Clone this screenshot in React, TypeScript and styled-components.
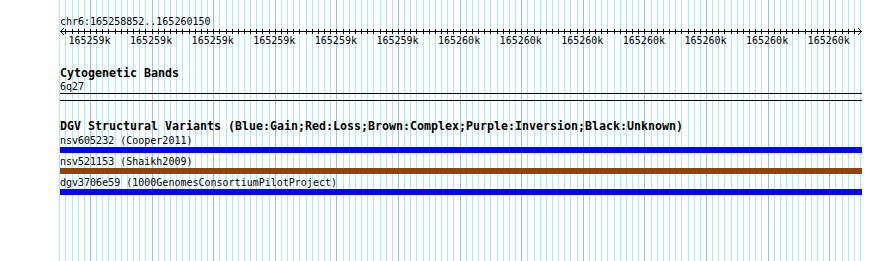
import styled, { createGlobalStyle } from "styled-components";

const GlobalStyle = createGlobalStyle`
  html, body {
    margin: 0;
    padding: 0;
    background: #fff;
  }
`;

// bp scale read off the picture: one minor grid line every 10 bp
const GRID_START = 59.2;
const GRID_STEP = 6.16;
const GRID_COUNT = 131;
const AXIS_LEFT = 60;
const AXIS_RIGHT = 862;

const gridX = (n: number) => Math.round(GRID_START + GRID_STEP * n) + 0.5;

const tickLabels = [
  "165259k", "165259k", "165259k", "165259k", "165259k", "165259k",
  "165260k", "165260k", "165260k", "165260k", "165260k", "165260k", "165260k",
];

const variants = [
  { name: "nsv605232", study: "Cooper2011", color: "#0000ff" },
  { name: "nsv521153", study: "Shaikh2009", color: "#8b4513" },
  { name: "dgv3706e59", study: "1000GenomesConsortiumPilotProject", color: "#0000ff" },
];

const Page = styled.main`
  position: relative;
  width: 890px;
  height: 261px;
  overflow: hidden;
  background: #fff;
  color: #000;
`;

const GridLayer = styled.svg`
  position: absolute;
  inset: 0;
  pointer-events: none;
`;

const Tracks = styled.div`
  position: relative;
  width: 802px;
  padding-left: 60px;
  display: flex;
  flex-direction: column;
`;

const Track = styled.section<{ $gap: number }>`
  display: flex;
  flex-direction: column;
  margin-top: ${(p) => p.$gap}px;
`;

const TrackTitle = styled.h2`
  margin: 0;
  font-family: "DejaVu Sans Mono", monospace;
  font-weight: bold;
  font-size: 11.63px;
  line-height: 11px;
  white-space: nowrap;
`;

const SmallLabel = styled.div<{ $top?: number }>`
  font-family: "DejaVu Sans Mono", monospace;
  font-size: 10px;
  line-height: 12px;
  margin-top: ${(p) => p.$top ?? 0}px;
  white-space: nowrap;
`;

const Ruler = styled.svg`
  display: block;
  width: 802px;
  height: 20px;
  margin-left: -60px;
  padding-left: 0;
  overflow: visible;
`;

const BandBox = styled.div`
  height: 6px;
  border-top: 1px solid #000;
  border-bottom: 1px solid #000;
`;

const Bar = styled.div<{ $color: string }>`
  height: 6px;
  background: ${(p) => p.$color};
`;

function Grid() {
  return (
    <GridLayer width={890} height={261} shapeRendering="crispEdges">
      {Array.from({ length: GRID_COUNT }, (_, n) => (
        <line
          key={n}
          x1={gridX(n)}
          x2={gridX(n)}
          y1={0}
          y2={261}
          stroke={n % 10 === 5 ? "#8cc6ea" : "#a6ecf0"}
          strokeWidth={1}
        />
      ))}
    </GridLayer>
  );
}

function Axis() {
  const y = 3.5;
  return (
    <Ruler viewBox="0 0 862 20" width={862} height={20} style={{ width: 862 }}>
      <g stroke="#000" strokeWidth={1} shapeRendering="crispEdges">
        <line x1={AXIS_LEFT} x2={AXIS_RIGHT} y1={y} y2={y} />
        {Array.from({ length: GRID_COUNT }, (_, n) => {
          const x = gridX(n);
          if (x < AXIS_LEFT + 3 || x > AXIS_RIGHT - 3) return null;
          return <line key={n} x1={x} x2={x} y1={1} y2={6} />;
        })}
      </g>
      <g stroke="#000" strokeWidth={1} fill="none">
        <polyline points={`${AXIS_LEFT + 4},0 ${AXIS_LEFT + 0.5},${y} ${AXIS_LEFT + 4},7`} />
        <polyline points={`${AXIS_RIGHT - 4},0 ${AXIS_RIGHT - 0.5},${y} ${AXIS_RIGHT - 4},7`} />
      </g>
      {tickLabels.map((label, i) => (
        <text
          key={i}
          x={89.5 + 61.6 * i}
          y={16}
          textAnchor="middle"
          fontFamily="DejaVu Sans Mono, monospace"
          fontSize={10}
          fill="#000"
        >
          {label}
        </text>
      ))}
    </Ruler>
  );
}

export default function App() {
  return (
    <>
      <GlobalStyle />
      <Page>
        <Grid />
        <Tracks>
          <Track $gap={16}>
            <SmallLabel>chr6:165258852..165260150</SmallLabel>
            <Axis />
          </Track>
          <Track $gap={20}>
            <TrackTitle>Cytogenetic Bands</TrackTitle>
            <SmallLabel $top={2}>6q27</SmallLabel>
            <BandBox />
          </Track>
          <Track $gap={20}>
            <TrackTitle>
              DGV Structural Variants
              (Blue:Gain;Red:Loss;Brown:Complex;Purple:Inversion;Black:Unknown)
            </TrackTitle>
            {variants.map((v, i) => (
              <div key={v.name}>
                <SmallLabel $top={i === 0 ? 3 : 3}>
                  {v.name} ({v.study})
                </SmallLabel>
                <Bar $color={v.color} />
              </div>
            ))}
          </Track>
        </Tracks>
      </Page>
    </>
  );
}
